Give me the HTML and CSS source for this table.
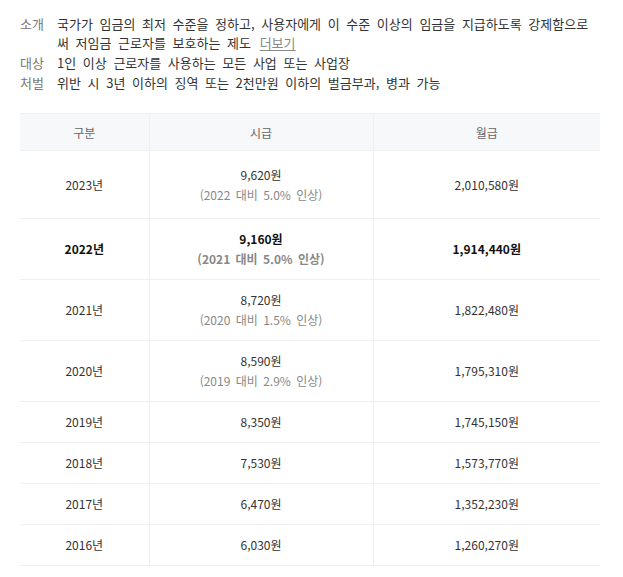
FILE: index.html
```html
<!DOCTYPE html>
<html lang="ko">
<head>
<meta charset="utf-8">
<link rel="stylesheet" href="styles.css">
</head>
<body>
<div class="wrap">
  <dl class="info">
    <div class="item">
      <dt>소개</dt>
      <dd>국가가 임금의 최저 수준을 정하고, 사용자에게 이 수준 이상의 임금을 지급하도록 강제함으로써 저임금 근로자를 보호하는 제도 <a class="more">더보기</a></dd>
    </div>
    <div class="item">
      <dt>대상</dt>
      <dd>1인 이상 근로자를 사용하는 모든 사업 또는 사업장</dd>
    </div>
    <div class="item">
      <dt>처벌</dt>
      <dd>위반 시 3년 이하의 징역 또는 2천만원 이하의 벌금부과, 병과 가능</dd>
    </div>
  </dl>

  <table class="wage">
    <colgroup>
      <col class="c1"><col class="c2"><col class="c3">
    </colgroup>
    <thead>
      <tr><th>구분</th><th>시급</th><th>월급</th></tr>
    </thead>
    <tbody>
      <tr class="two first"><td>2023년</td><td>9,620원<span class="sub">(2022 대비 5.0% 인상)</span></td><td>2,010,580원</td></tr>
      <tr class="two cur"><td>2022년</td><td>9,160원<span class="sub">(2021 대비 5.0% 인상)</span></td><td>1,914,440원</td></tr>
      <tr class="two"><td>2021년</td><td>8,720원<span class="sub">(2020 대비 1.5% 인상)</span></td><td>1,822,480원</td></tr>
      <tr class="two"><td>2020년</td><td>8,590원<span class="sub">(2019 대비 2.9% 인상)</span></td><td>1,795,310원</td></tr>
      <tr><td>2019년</td><td>8,350원</td><td>1,745,150원</td></tr>
      <tr><td>2018년</td><td>7,530원</td><td>1,573,770원</td></tr>
      <tr><td>2017년</td><td>6,470원</td><td>1,352,230원</td></tr>
      <tr><td>2016년</td><td>6,030원</td><td>1,260,270원</td></tr>
    </tbody>
  </table>
</div>
</body>
</html>
```
FILE: styles.css
```css
* { box-sizing: border-box; }
html, body { margin: 0; padding: 0; background: #fff; }
body {
  font-family: "Noto Sans CJK KR", "Noto Sans", sans-serif;
  color: #333;
}
.wrap {
  padding: 14px 22px 0 20px;
  width: 623px;
}
.info { margin: 0; font-size: 13px; line-height: 19px; padding-right: 5px; }
.item { display: flex; gap: 11px; margin-bottom: 1px; }
.item dt { color: #777; flex: none; width: 26px; }
.item dd { margin: 0; color: #333; flex: 1; word-spacing: 3px; word-break: break-all; }
.more { color: #888; text-decoration: underline; text-underline-offset: 2px; margin-left: 2px; word-spacing: 0; }

.wage {
  margin-top: 21px;
  width: 580px;
  border-collapse: collapse;
  table-layout: fixed;
  font-size: 12px;
  color: #333;
}
.c1 { width: 129px; }
.c2 { width: 224px; }
.c3 { width: 227px; }
.wage th {
  background: #f7f8fa;
  color: #666;
  font-weight: normal;
  height: 37px;
  border-top: 1px solid #eceef1;
  border-bottom: 1px solid #eceef1;
  border-left: 1px solid #eef0f3;
  padding: 0;
  text-align: center;
}
.wage th:first-child { border-left: none; }
.wage td {
  text-align: center;
  height: 41px;
  padding: 0;
  line-height: 20px;
  border-bottom: 1px solid #eeeeee;
  border-left: 1px solid #eeeeee;
}
.wage td:first-child { border-left: none; }
.wage tr.two td { height: 61px; }
.wage tr.first td { height: 68px; }
.sub { display: block; color: #888; word-spacing: 2px; }
.wage tr.cur td { font-weight: bold; color: #111; }
.wage tr.cur .sub { color: #888; }
```
